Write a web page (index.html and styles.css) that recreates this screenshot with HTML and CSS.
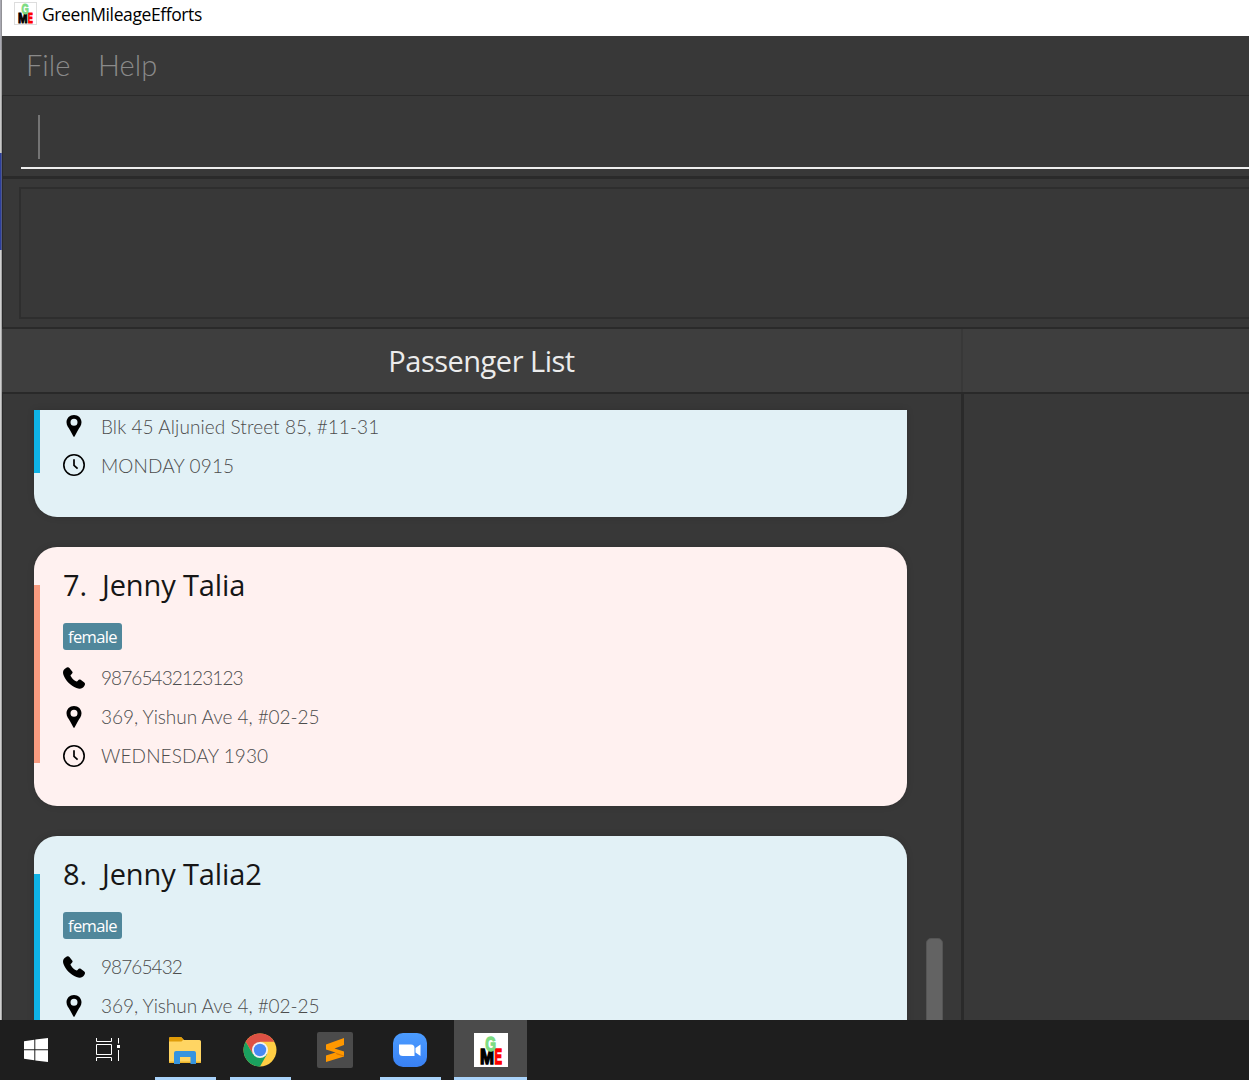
FILE: index.html
```html
<!DOCTYPE html>
<html lang="en">
<head>
<meta charset="utf-8">
<title>GreenMileageEfforts</title>
<link rel="stylesheet" href="styles.css">
</head>
<body>
<svg class="defs" aria-hidden="true">
  <symbol id="phone" viewBox="0 0 22 22"><path d="M3 1C4.500-.2 6 .4 7 1.800L9.200 4.500C10 5.600 9.600 6.400 8.500 7.200C7.300 8 7.300 8.500 8 9.500C9.300 11.500 10.700 13 12.500 14.100C13.600 14.800 14.300 14.500 15 13.400C15.800 12.400 16.800 12.300 18 13L21 15.300C22.300 16.300 22.300 17.500 21.300 18.900C19.500 21.700 17 22.300 13.500 21C7.500 18.600 2.500 13.500 .5 8C-.5 4.800 0 2.800 3 1Z"/></symbol>
  <symbol id="pin" viewBox="0 0 22 22"><path fill-rule="evenodd" d="M11 0C6.700 0 3.500 3.200 3.500 7.300C3.500 10.300 5.500 12.600 7.200 15.500L10.300 21.300C10.600 22 11.400 22 11.700 21.300L14.800 15.500C16.500 12.600 18.500 10.300 18.500 7.300C18.500 3.200 15.300 0 11 0ZM11 3.800A3.500 3.500 0 1 1 11 10.800A3.500 3.500 0 1 1 11 3.800Z"/></symbol>
  <symbol id="clock" viewBox="0 0 22 22"><circle cx="11" cy="11" r="10.200" fill="none" stroke="#000" stroke-width="1.600"/><path d="M11 5.300V11.300L14.600 14.600" fill="none" stroke="#000" stroke-width="1.700"/></symbol>
  <symbol id="gme" viewBox="0 0 34 34"><rect width="34" height="34" fill="#fff"/>
    <g font-family="Liberation Sans" font-weight="bold" stroke-width="1.600">
    <text x="6" y="30.500" font-size="22" textLength="14" lengthAdjust="spacingAndGlyphs" stroke="#000">M</text>
    <text x="20.500" y="30.500" font-size="22" textLength="7.500" lengthAdjust="spacingAndGlyphs" fill="#f00" stroke="#f00">E</text>
    <text x="11.200" y="17.800" font-size="21" textLength="10.800" lengthAdjust="spacingAndGlyphs" fill="#7ddc82" stroke="#7ddc82" stroke-width="1.300">G</text></g></symbol>
</svg>
<div class="desktop">
  <div class="edge"></div>
  <div class="window">
    <header class="titlebar"><svg class="app-icon"><use href="#gme"/></svg><span class="app-name">GreenMileageEfforts</span></header>
    <nav class="menu"><span class="file">File</span><span class="help">Help</span></nav>
    <div class="command"><div class="field"><span class="caret"></span></div></div>
    <div class="result"><div class="result-box"></div></div>
    <div class="heads"><h1 class="head">Passenger List</h1><div class="head-next"></div></div>
    <main class="panes">
      <section class="pane">
        <div class="cards">
          <article class="card blue partial">
            <div class="row"><svg class="icon"><use href="#pin"/></svg><span class="t-street">Blk 45 Aljunied Street 85, #11-31</span></div>
            <div class="row"><svg class="icon"><use href="#clock"/></svg><span class="t-time">MONDAY 0915</span></div>
          </article>
          <article class="card pink">
            <h2 class="name"><span class="num">7.</span><span>Jenny Talia</span></h2>
            <span class="tag">female</span>
            <div class="row"><svg class="icon"><use href="#phone"/></svg><span class="t-digits">98765432123123</span></div>
            <div class="row"><svg class="icon"><use href="#pin"/></svg><span class="t-addr">369, Yishun Ave 4, #02-25</span></div>
            <div class="row"><svg class="icon"><use href="#clock"/></svg><span class="t-time">WEDNESDAY 1930</span></div>
          </article>
          <article class="card blue">
            <h2 class="name"><span class="num">8.</span><span>Jenny Talia2</span></h2>
            <span class="tag">female</span>
            <div class="row"><svg class="icon"><use href="#phone"/></svg><span class="t-digits">98765432</span></div>
            <div class="row"><svg class="icon"><use href="#pin"/></svg><span class="t-addr">369, Yishun Ave 4, #02-25</span></div>
          </article>
        </div>
        <div class="scroll"><div class="thumb"></div></div>
      </section>
      <section class="pane-next"></section>
    </main>
  </div>
</div>
<footer class="taskbar">
  <div class="task start"><svg width="24" height="24" viewBox="0 0 24 24" fill="#fff"><path d="M0 3.300L10.300 1.800V11.300H0ZM11.300 1.600L24 0V11.300H11.300ZM0 12.300H10.300V22.300L0 20.800ZM11.300 12.300H24V24L11.300 22.500Z"/></svg></div>
  <div class="task view"><svg width="24" height="24" viewBox="0 0 24 24" fill="none" stroke="#fff"><path d="M.5 0V3.500H15.500V0M.5 6.500H15.500V16.500H.5ZM.5 23V19.500H15.500V23M22.500 0V5.500M22.500 12V23"/><rect x="21" y="7" width="3" height="3" fill="#fff" stroke="none"/></svg></div>
  <div class="task open"><svg width="32" height="27" viewBox="0 0 32 27"><path d="M0 1.500Q0 0 1.500 0H12L15 3H30.500Q32 3 32 4.500V25H0Z" fill="#ffd563"/><path d="M0 1.500Q0 0 1.500 0H12L14.500 2.500L12.500 4.500H0Z" fill="#e09c08"/><path d="M0 24.500H32V26H0Z" fill="#eeb52b"/><path d="M5 16Q5 14 7 14H25Q27 14 27 16V27H21.500V20H11V27H5Z" fill="#3694df"/></svg></div>
  <div class="task open"><svg width="34" height="34" viewBox="0 0 34 34"><circle cx="17" cy="17" r="16.500" fill="#ffce44"/><path d="M2.700 8.800A16.500 16.500 0 0 1 31.300 8.800H17L9.900 21.100Z" fill="#dd5144"/><path d="M2.700 8.800A16.500 16.500 0 0 0 17 33.500L24.100 21.100H9.900Z" fill="#1aa15f"/><circle cx="17" cy="17" r="8" fill="#f2f2f2"/><circle cx="17" cy="17" r="6.200" fill="#4889f4"/></svg></div>
  <div class="task"><svg width="36" height="36" viewBox="0 0 36 36"><rect width="36" height="36" rx="2" fill="#4b4b4b"/><path d="M9 12.500L27 6V13L17.500 16.500L27 19.500V24.500L9 30V23.500L18.500 20.500L9 17.500Z" fill="#ff9800"/><path d="M18 20.500L27 23.500V24.500L20 22.500Z" fill="#db7900"/></svg></div>
  <div class="task open"><svg width="34" height="34" viewBox="0 0 34 34"><defs><linearGradient id="zg" x2="0" y2="1"><stop stop-color="#4b9cff"/><stop offset="1" stop-color="#3981f5"/></linearGradient></defs><rect width="34" height="34" rx="10" fill="url(#zg)"/><path d="M6 11.500H18Q21.500 11.500 21.500 15V23H10Q6 23 6 19.500ZM22.500 15L27.500 11.500V23L22.500 19.500Z" fill="#fff"/></svg></div>
  <div class="task open active"><svg width="34" height="34"><use href="#gme"/></svg></div>
</footer>
</body>
</html>
```
FILE: styles.css
```css
* { box-sizing: border-box; }
body { margin: 0; height: 1080px; overflow: hidden; display: flex; flex-direction: column; background: #383838; font-family: "Open Sans", "Noto Sans", sans-serif; }
.defs { display: none; }
.desktop { height: 1020px; display: flex; }
.edge { width: 2px; background: linear-gradient(90deg, transparent 50%, #7777 50%), linear-gradient(#a9a9b2 0 50px, #c8c8c8 50px 153px, #2c3e9c 153px 250px, #d0d0d0 250px); }
.window { flex: 1; min-width: 0; display: flex; flex-direction: column; }
.titlebar { height: 36px; background: #fff; display: flex; padding-left: 12px; }
.app-icon { width: 23px; height: 23px; margin-top: 2px; outline: 1px solid #ddd; outline-offset: -1px; }
.app-name { margin-left: 5px; font-size: 17.500px; line-height: 28px; color: #000; letter-spacing: -.4px; }
.menu { height: 59px; display: flex; padding-left: 24px; font: 300 29px/57px Lato, sans-serif; color: #8a8a8a; }
.file { width: 72px; }
.help { letter-spacing: .1px; }
.command { height: 84px; padding: 17px 0 0 18px; border: solid #2a2a2a; border-width: 1px 0 3px 1px; }
.field { height: 56px; padding: 2px 0 0 17px; border-bottom: 2px solid #eee; }
.caret { display: block; width: 2px; height: 44px; margin-left: -.5px; background: #747474; }
.result { height: 150px; padding: 8px 0 8px 16px; border: solid #2a2a2a; border-width: 0 0 2px 1px; }
.result-box { height: 132px; border: 2px solid #2e2e2e; border-right: 0; }
.heads { height: 65px; display: flex; background: #3e3e3e; border-bottom: 2px solid #292929; }
.head { width: 961px; margin: 0; text-align: center; font-size: 29px; font-weight: 400; line-height: 63px; color: #ececec; letter-spacing: -.5px; border-right: 2px solid #383838; }
.head-next { flex: 1; }
.panes { flex: 1; min-height: 0; display: flex; }
.pane { width: 962px; display: flex; padding: 16px 0 0 31px; border: solid #2a2a2a; border-width: 0 3px 0 1px; overflow: hidden; }
.pane-next { flex: 1; }
.cards { width: 873px; display: flex; flex-direction: column; gap: 30px; }
.card { height: 259.500px; flex: none; padding: 17px 29px; border-radius: 23px; background: linear-gradient(var(--bar), var(--bar)) 0 38px / 6px 178px no-repeat, var(--fill); box-shadow: 0 0 7px #0002; }
.blue { --bar: #0eb3e6; --fill: #e2f1f6; }
.pink { --bar: #f89b80; --fill: #fff1f0; }
.partial { height: 106.500px; padding-top: 5px; border-radius: 0 0 23px 23px; background-position: 0 -115px, 0 0; }
.partial .row span { padding-top: 2px; }
.name { display: flex; height: 42px; margin: 0 0 17px; font-size: 29px; line-height: 41px; font-weight: 400; color: #161616; letter-spacing: -.12px; }
.num { width: 39px; }
.tag { display: block; width: 59px; height: 27px; margin-bottom: 17px; background: #50879b; border-radius: 3px; color: #fff; font-size: 16.500px; line-height: 27px; text-align: center; letter-spacing: -.65px; }
.row { display: flex; align-items: center; height: 22px; margin-bottom: 17px; font: 300 19px/22px Lato, sans-serif; color: #4c4c4c; white-space: nowrap; }
.t-street { letter-spacing: .08px; }
.t-time { letter-spacing: .12px; }
.t-addr { letter-spacing: -.05px; }
.t-digits { letter-spacing: -.9px; }
.icon { width: 22px; height: 22px; margin-right: 16px; }
.scroll { width: 52px; padding: 528px 0 0 19px; }
.thumb { width: 17px; height: 100px; border: 1px solid #555; border-radius: 5px; background: #636363; }
.taskbar { height: 60px; display: flex; background: #1e1e1e; }
.task { width: 61px; margin-right: 14px; padding-right: 2px; display: flex; align-items: center; justify-content: center; }
.start { width: 72px; margin: 0; padding: 0; }
.view { width: 72px; margin: 0 11px 0 0; padding: 0; }
.open { border-bottom: 3px solid #a9d3fa; padding-top: 3px; }
.active { width: 73px; margin-left: -1px; padding-right: 0; background: #4b4b4b; }
```
